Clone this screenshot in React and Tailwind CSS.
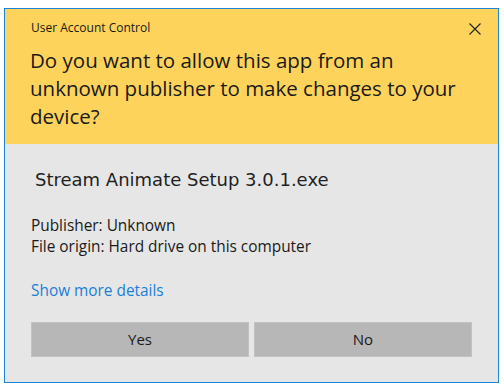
import React from 'react';

const font = { fontFamily: '"Open Sans", "Noto Sans", sans-serif' };

export default function App() {
  return (
    <div className="w-[504px] h-[391px] bg-white pt-[8px] pl-[4px]" style={font}>
      <div className="w-[495px] h-[375px] border border-[#1a84d8] flex flex-col bg-[#e6e6e6]">
        {/* yellow header */}
        <div className="bg-[#fdd35c] h-[135px] pl-[26px] pr-[17px] pt-[9px]">
          <div className="flex items-center justify-between h-[20px]">
            <span className="text-[12px] text-[#1a1a1a]">User Account Control</span>
            <svg width="12" height="12" viewBox="0 0 12 12" className="mt-[1px]">
              <path d="M0.5 0.5L11.5 11.5M11.5 0.5L0.5 11.5" stroke="#222" strokeWidth="1.1" />
            </svg>
          </div>
          <h1 className="mt-[8px] w-[440px] -ml-[1px] text-[20.5px] leading-[28px] text-[#1a1a1a] font-normal">
            Do you want to allow this app from an unknown publisher to make changes to your device?
          </h1>
        </div>

        {/* body */}
        <div className="flex-1 pl-[26px] pr-[26px]">
          <div
            className="mt-[25px] text-[18px] leading-[21px] text-[#1f1f1f] pl-[4px]"
            style={{ fontFamily: '"DejaVu Sans", sans-serif' }}
          >
            Stream Animate Setup 3.0.1.exe
          </div>
          <div className="mt-[25px] text-[15.4px] leading-[21px] text-[#1a1a1a]">
            <div>Publisher: Unknown</div>
            <div>File origin: Hard drive on this computer</div>
          </div>
          <div className="mt-[23px] text-[15.4px] leading-[21px] text-[#1a7fd5]">Show more details</div>
          <div className="mt-[21px] flex gap-[5px]">
            <button className="w-[218px] h-[35px] bg-[#b7b7b7] border border-[#c2c2c2] text-[15px] text-[#1a1a1a]">Yes</button>
            <button className="w-[218px] h-[35px] bg-[#b7b7b7] border border-[#c2c2c2] text-[15px] text-[#1a1a1a]">No</button>
          </div>
        </div>
      </div>
    </div>
  );
}
